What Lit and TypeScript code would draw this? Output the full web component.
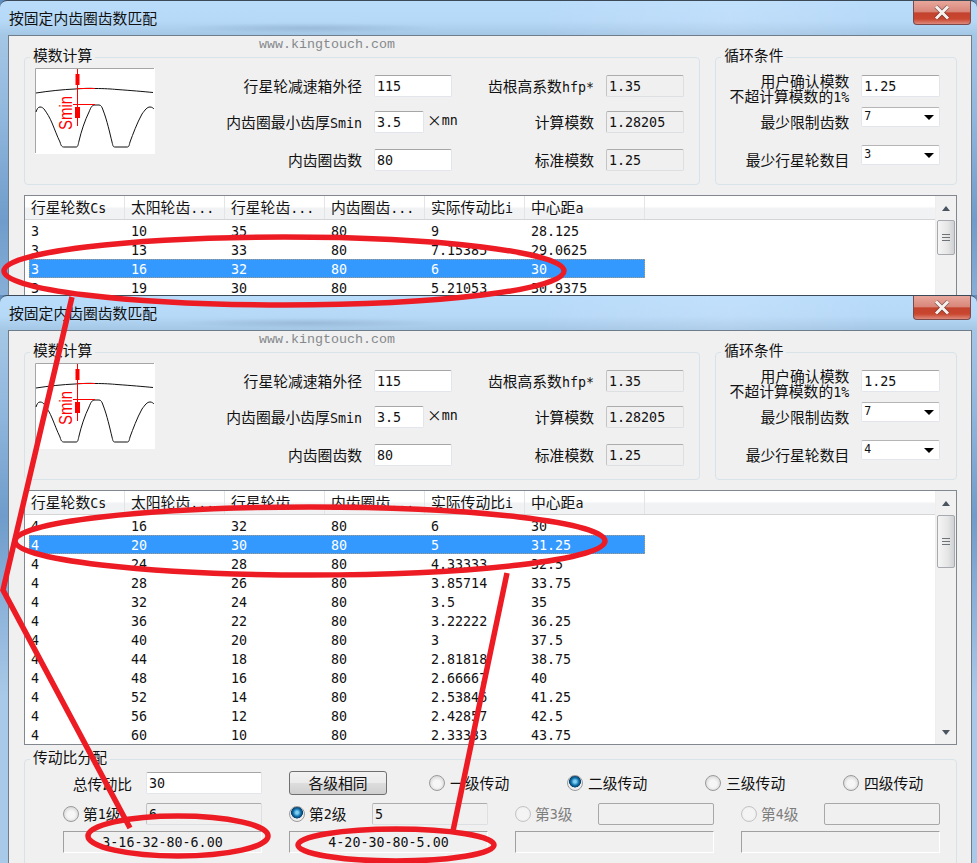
import { LitElement, html, css, svg, nothing } from "lit";
import { customElement, property } from "lit/decorators.js";

type Row = [string, string, string, string, string, string];

/* Latin runs are set smaller so they take 8px a character, as the SimSun half-width cells do. */
function t(s: string) {
  return s.split(/([\x20-\x7e]+)/).map((p, i) => (i % 2 ? html`<span class="l">${p}</span>` : p));
}

const HEAD = ["行星轮数Cs", "太阳轮齿...", "行星轮齿...", "内齿圈齿...", "实际传动比i", "中心距a"];

@customElement("kt-window")
class KtWindow extends LitElement {
  @property({ attribute: false }) rows: Row[] = [];
  @property({ type: Number }) selected = 0;
  @property() planets = "3";
  @property({ type: Number }) thumb = 35;
  @property({ type: Boolean }) ratio = false;

  static styles = css`
    :host {
      display: block;
      font: 14.8px/22px "Noto Sans CJK SC", sans-serif;
      color: #111;
    }
    .l { font: 13.33px "DejaVu Sans Mono", monospace; }
    .win {
      box-sizing: border-box;
      height: 100%;
      overflow: hidden;
      padding: 0 5px 0 8px;
      border-top: 1px solid #3c4a58;
      border-radius: 7px 7px 0 0;
      background:
        linear-gradient(180deg, #b9dcfb 0, #b7d9f8 20px, #a5c7e6 34px, #8fb6dc 120px, #6f9ccb 220px, #a9c9e8 400px);
      position: relative;
    }
    .title {
      height: 34px;
      box-sizing: border-box;
      padding: 6px 0 0 1px;
      line-height: 22px;
      background:
        radial-gradient(ellipse 130px 5px at 300px 27px, rgba(90, 120, 150, .24), transparent),
        linear-gradient(90deg, transparent 55%, rgba(255,255,255,.12) 75%, transparent 90%);
    }
    .close {
      position: absolute;
      top: 0;
      right: 6px;
      width: 58px;
      height: 24px;
      box-sizing: border-box;
      border: 1px solid #7c4a4a;
      border-top: 0;
      border-radius: 0 0 4px 4px;
      background: linear-gradient(180deg, #e8a79c 0, #d9877a 46%, #c4432e 52%, #c9462f 78%, #dd8a7c 100%);
      display: flex;
      align-items: center;
      justify-content: center;
    }
    .client {
      background: #f0f0f0;
      border: 1px solid #6f7d8b;
      border-bottom: 0;
      padding: 21px 14px 0 15px;
      position: relative;
      height: 100%;
      box-sizing: border-box;
    }
    .url {
      position: absolute;
      top: 0;
      left: 250px;
      color: #85898c;
      font: 13.33px/17px "Liberation Mono", monospace;
    }
    .top { display: flex; gap: 15px; height: 128px; }
    .group {
      position: relative;
      box-sizing: border-box;
      border: 1px solid #d8e2e9;
      border-radius: 4px;
    }
    .legend {
      position: absolute;
      top: -14px;
      left: 5px;
      padding: 0 3px;
      background: #f0f0f0;
    }
    .g1 { width: 677px; display: flex; padding: 10px 0 0 10px; }
    .g2 { width: 242px; padding-top: 17px; }
    .pic { display: block; width: 120px; height: 86px; flex: none; }
    .grid {
      display: grid;
      align-items: start;
      grid-template-rows: 36px 38px 22px;
      margin-top: 7px;
    }
    .g1 .grid { grid-template-columns: 219px 78px 154px 78px; }
    .g2 .grid { grid-template-columns: 145px 79px; margin-top: 0; }
    .lbl {
      text-align: right;
      padding-right: 12px;
      white-space: nowrap;
      line-height: 22px;
    }
    .two { line-height: 15px; margin-top: -2px; }
    .in {
      box-sizing: border-box;
      height: 22px;
      padding-left: 2px;
      font: 13.33px/22px "DejaVu Sans Mono", monospace;
      background: #fff;
      border: 1px solid #e2e6ec;
      border-top-color: #a6a6a6;
      border-radius: 2px;
    }
    .ro { background: #f0f0f0; border-color: #dce0e3; border-top-color: #acacac; border-left-color: #c4c4c4; }
    .off { background: #f0f0f0; border-color: #a8a8a8; }
    .inwrap { display: flex; white-space: nowrap; }
    .inwrap .in { width: 50px; flex: none; }
    .unit { padding-left: 3px; line-height: 18px; display: flex; align-items: center; height: 18px; }
    .sel {
      box-sizing: border-box;
      margin-top: -4px;
      height: 20px;
      background: #fff;
      border: 1px solid #e2e6ec;
      border-top-color: #b5b5b5;
      border-radius: 2px;
      display: flex;
      align-items: center;
      justify-content: space-between;
      padding: 0 5px 2px 2px;
      font: 11.5px "DejaVu Sans Mono", monospace;
    }
    .tri {
      width: 0;
      height: 0;
      margin-top: 2px;
      border: 5px solid transparent;
      border-top: 5px solid #000;
      border-bottom: 0;
    }
    .list {
      margin-top: 10px;
      height: 255px;
      width: 933px;
      box-sizing: border-box;
      border: 1px solid #828790;
      background: #fff;
      display: flex;
      overflow: hidden;
    }
    .table { flex: none; width: 910px; }
    .head {
      display: flex;
      height: 24px;
      box-sizing: border-box;
      border-bottom: 1px solid #d5d5d5;
      background: linear-gradient(180deg, #fff 0, #fff 45%, #f1f2f4 55%, #f1f2f4 100%);
    }
    .h {
      width: 100px;
      box-sizing: border-box;
      padding-left: 6px;
      border-right: 1px solid #e3e4e6;
      white-space: nowrap;
      overflow: hidden;
    }
    .h:nth-child(6) { width: 120px; }
    .rows { padding-top: 1px; }
    .r { display: flex; height: 19px; margin-left: 4px; width: 616px; box-sizing: border-box; }
    .c {
      width: 100px;
      height: 19px;
      flex: none;
      box-sizing: border-box;
      padding-left: 6px;
      font: 13.33px/21px "DejaVu Sans Mono", monospace;
    }
    .c:first-child { width: 96px; padding-left: 2px; }
    .c:last-child { width: 120px; }
    .r.on {
      background: #3399ff;
      color: #fff;
      outline: 1px dotted #b09a80;
      outline-offset: -1px;
    }
    .sb {
      margin-left: auto;
      width: 21px;
      background: #f1f1f1;
      border-left: 1px solid #eee;
      display: flex;
      flex-direction: column;
      align-items: center;
      position: relative;
    }
    .arrow { height: 24px; display: flex; align-items: center; justify-content: center; flex: none; }
    .up { width: 0; height: 0; border: 4px solid transparent; border-bottom: 5px solid #4a5560; border-top: 0; }
    .dn { width: 0; height: 0; border: 4px solid transparent; border-top: 5px solid #4a5560; border-bottom: 0; }
    .thumb {
      width: 18px;
      box-sizing: border-box;
      border: 1px solid #a6a9ad;
      border-radius: 2px;
      background: linear-gradient(90deg, #f5f5f5, #e6e6e6 60%, #cfd1d3);
      display: flex;
      flex-direction: column;
      align-items: center;
      justify-content: center;
      gap: 2px;
      flex: none;
    }
    .thumb i { display: block; width: 8px; height: 1px; background: #6e7378; }
    .gap { flex: 1; }
    .g3 { margin-top: 14px; width: 933px; height: 110px; padding: 12px 0 0 38px; }
    .g3row { display: flex; }
    .g3row + .g3row { margin-top: 8px; }
    .g3row.third { margin-top: 6px; }
    .cell { width: 199px; margin-right: 27px; display: flex; flex: none; }
    .cell .in { flex: 1; min-width: 0; }
    .cap { width: 83px; flex: none; display: flex; align-items: center; white-space: nowrap; }
    .cap.right { justify-content: flex-end; padding-right: 14px; box-sizing: border-box; }
    .dim { color: #7d7d7d; }
    .radio {
      box-sizing: border-box;
      width: 16px;
      height: 16px;
      margin-right: 4px;
      border-radius: 50%;
      border: 1px solid #9a9a9a;
      background: radial-gradient(circle at 50% 55%, #f6f6f6 0 35%, #dcdcdc 70%, #ececec 100%);
      flex: none;
    }
    .radio.dis { border-color: #c4c4c4; background: radial-gradient(circle, #f4f4f4 0 50%, #e6e6e6 100%); }
    .radio.on { background: radial-gradient(circle at 50% 40%, #7fd0f5 0 12%, #0f6fa8 35%, #0a3f6c 52%, #eee 56%); }
    .btn {
      box-sizing: border-box;
      flex: none;
      width: 98px;
      height: 24px;
      margin: -1px 42px 0 0;
      border: 1px solid #707070;
      border-radius: 3px;
      background: linear-gradient(180deg, #f2f2f2 0, #ebebeb 48%, #dddddd 52%, #cfcfcf 100%);
      text-align: center;
      line-height: 22px;
    }
    .opt { width: 138px; display: flex; align-items: center; height: 22px; flex: none; white-space: nowrap; }
    .opt:last-child { width: auto; }
    .opt .radio { margin-right: 5px; }
    .box {
      width: 199px;
      height: 22px;
      margin-right: 27px;
      box-sizing: border-box;
      flex: none;
      border: 1px solid #fff;
      border-top-color: #a0a0a0;
      border-left-color: #a0a0a0;
      text-align: center;
      font: 13.33px/21px "DejaVu Sans Mono", monospace;
    }
  `;

  private field(label: string, value: string, cls = "in") {
    return html`<div class="lbl">${t(label)}</div><div class=${cls}>${value}</div>`;
  }

  private pic() {
    return svg`<svg class="pic" viewBox="0 0 120 86" xmlns="http://www.w3.org/2000/svg">
      <rect width="120" height="86" fill="#fff"/>
      <path d="M.5 85V.5H119" fill="none" stroke="#a6a6a6"/>
      <path d="M1 25C14 23 28 21.500 40 21C48 20.500 54 20 60 20.500C70 20.500 76 21 82 21.500C96 22.500 108 23.500 118 24.500" fill="none" stroke="#111"/>
      <path d="M1 44C2 41 3 39 5 39C7 39 8 40 9 41C12 45 15 50 17 55C20 62 22 68 25 74C26 78 27 79 29 79H41C43 79 43 77 44 73C46 64 50 52 54 44C56 39 57 37 60 37H64C66 37 67 39 68 42C72 52 75 66 77 74C78 78 78 79 80 79H92C94 79 94 78 95 74C98 66 102 55 107 46C110 42 112 39 115 39C117 39 118 40 119 41" fill="none" stroke="#111"/>
      <path d="M42.500 1V58M42 20.500H60M38 36.500H60" fill="none" stroke="#f00"/>
      <path d="M40.500 6H44.500V17H40.500ZM40 39H45V50H40Z" fill="#f00"/>
      <text transform="translate(37 62) rotate(-90)" font-family="Liberation Sans, sans-serif" font-size="18" textLength="34" lengthAdjust="spacingAndGlyphs" fill="#f00">Smin</text>
    </svg>`;
  }

  private grip() {
    return html`<i></i><i></i><i></i>`;
  }

  private ratioGroup() {
    const chain = this.planets === "4";
    return html`<div class="group g3">
      <div class="legend">传动比分配</div>
      <div class="g3row">
        <div class="cell">
          <div class="cap right">总传动比</div>
          <div class="in">30</div>
        </div>
        <div class="btn">各级相同</div>
        <div class="opt"><span class="radio"></span>一级传动</div>
        <div class="opt"><span class="radio on"></span>二级传动</div>
        <div class="opt"><span class="radio"></span>三级传动</div>
        <div class="opt"><span class="radio"></span>四级传动</div>
      </div>
      <div class="g3row">
        <div class="cell">
          <div class="cap"><span class="radio"></span>第<span class="l">1</span>级</div>
          <div class="in ro">6</div>
        </div>
        <div class="cell">
          <div class="cap"><span class="radio on"></span>第<span class="l">2</span>级</div>
          <div class="in ro">5</div>
        </div>
        <div class="cell">
          <div class="cap dim"><span class="radio dis"></span>第<span class="l">3</span>级</div>
          <div class="in off"></div>
        </div>
        <div class="cell">
          <div class="cap dim"><span class="radio dis"></span>第<span class="l">4</span>级</div>
          <div class="in off"></div>
        </div>
      </div>
      <div class="g3row third">
        <div class="box">3-16-32-80-6.00</div>
        <div class="box">${chain ? "4-20-30-80-5.00" : ""}</div>
        <div class="box"></div>
        <div class="box"></div>
      </div>
    </div>`;
  }

  render() {
    return html`<div class="win">
      <div class="title">按固定内齿圈齿数匹配</div>
      <div class="close">
        <svg width="16" height="15" viewBox="0 0 16 15">
          <path d="M2 1.500L14 13.500M14 1.500L2 13.500" stroke="#3f2a2a" stroke-width="4.400" opacity=".55"/>
          <path d="M2 1.500L14 13.500M14 1.500L2 13.500" stroke="#f4f1ef" stroke-width="3"/>
        </svg>
      </div>
      <div class="client">
        <div class="url">www.kingtouch.com</div>
        <div class="top">
          <div class="group g1">
            <div class="legend">模数计算</div>
            ${this.pic()}
            <div class="grid">
              ${this.field("行星轮减速箱外径", "115")}
              ${this.field("齿根高系数hfp*", "1.35", "in ro")}
              <div class="lbl">${t("内齿圈最小齿厚Smin")}</div>
              <div class="inwrap"><div class="in">3.5</div><div class="unit">×<span class="l">mn</span></div></div>
              ${this.field("计算模数", "1.28205", "in ro")}
              ${this.field("内齿圈齿数", "80")}
              ${this.field("标准模数", "1.25", "in ro")}
            </div>
          </div>
          <div class="group g2">
            <div class="legend">循环条件</div>
            <div class="grid">
              <div class="lbl two">用户确认模数<br />不超计算模数的<span class="l">1%</span></div>
              <div class="in">1.25</div>
              <div class="lbl">最少限制齿数</div>
              <div class="sel">7<span class="tri"></span></div>
              <div class="lbl">最少行星轮数目</div>
              <div class="sel">${this.planets}<span class="tri"></span></div>
            </div>
          </div>
        </div>
        <div class="list">
          <div class="table">
            <div class="head">${HEAD.map((h) => html`<div class="h">${t(h)}</div>`)}</div>
            <div class="rows">
              ${this.rows.map(
                (r, i) => html`<div class="r ${i === this.selected ? "on" : ""}">
                  ${r.map((c) => html`<div class="c">${c}</div>`)}
                </div>`
              )}
            </div>
          </div>
          <div class="sb">
            <div class="arrow"><span class="up"></span></div>
            <div class="thumb" style="height:${this.thumb}px">${this.grip()}</div>
            <div class="gap"></div>
            <div class="arrow"><span class="dn"></span></div>
          </div>
        </div>
        ${this.ratio ? this.ratioGroup() : nothing}
      </div>
    </div>`;
  }
}

const ROWS_3: Row[] = [
  ["3", "10", "35", "80", "9", "28.125"],
  ["3", "13", "33", "80", "7.15385", "29.0625"],
  ["3", "16", "32", "80", "6", "30"],
  ["3", "19", "30", "80", "5.21053", "30.9375"],
];

const ROWS_4: Row[] = [
  ["4", "16", "32", "80", "6", "30"],
  ["4", "20", "30", "80", "5", "31.25"],
  ["4", "24", "28", "80", "4.33333", "32.5"],
  ["4", "28", "26", "80", "3.85714", "33.75"],
  ["4", "32", "24", "80", "3.5", "35"],
  ["4", "36", "22", "80", "3.22222", "36.25"],
  ["4", "40", "20", "80", "3", "37.5"],
  ["4", "44", "18", "80", "2.81818", "38.75"],
  ["4", "48", "16", "80", "2.66667", "40"],
  ["4", "52", "14", "80", "2.53846", "41.25"],
  ["4", "56", "12", "80", "2.42857", "42.5"],
  ["4", "60", "10", "80", "2.33333", "43.75"],
];

@customElement("app-root")
export class AppRoot extends LitElement {
  static styles = css`
    :host {
      display: block;
      position: relative;
      width: 977px;
      height: 863px;
      overflow: hidden;
      background: #5f8fc0;
    }
    .w1 { height: 295px; }
    .w2 { height: 568px; }
    .marks { position: absolute; inset: 0; pointer-events: none; }
  `;

  render() {
    return html`
      <kt-window class="w1" .rows=${ROWS_3} .selected=${2} planets="3" thumb="35"></kt-window>
      <kt-window class="w2" .rows=${ROWS_4} .selected=${1} planets="4" thumb="53" ratio></kt-window>
      <svg class="marks" width="977" height="863" viewBox="0 0 977 863">
        <g fill="none" stroke="#ed1c24" stroke-width="5.500">
          <ellipse cx="284" cy="271" rx="280" ry="34"></ellipse>
          <ellipse cx="310" cy="541" rx="295" ry="34"></ellipse>
          <ellipse cx="178" cy="836" rx="90" ry="20"></ellipse>
          <ellipse cx="396" cy="845" rx="98" ry="16"></ellipse>
          <path d="M72 297L3 590L130 828M507 573L453 831"></path>
        </g>
      </svg>
    `;
  }
}
